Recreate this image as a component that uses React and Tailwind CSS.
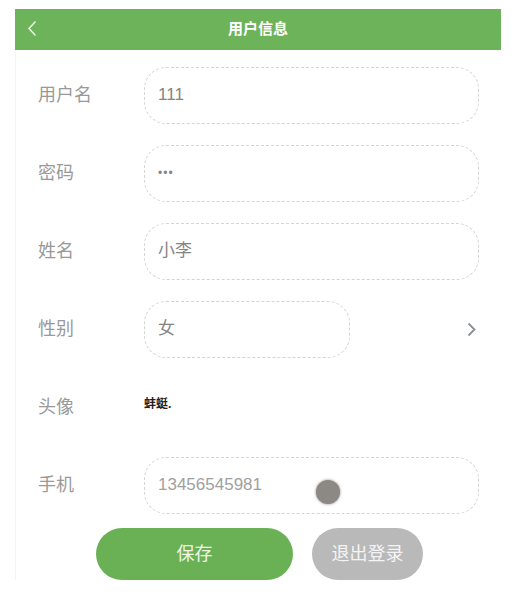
import { useState } from 'react'

const fields = [
  { label: '用户名', value: '111' },
  { label: '密码', value: '•••', small: true },
  { label: '姓名', value: '小李' },
]

function Field({ label, children }) {
  return (
    <div className="flex items-center h-[78px] pl-[22px] pr-[22px]">
      <div className="w-[106px] shrink-0 text-[18px] text-[#999999]">{label}</div>
      {children}
    </div>
  )
}

function Box({ value, className = '', textClass = 'text-[17px] text-[#858585]' }) {
  return (
    <div className={`h-[57px] rounded-[22px] border border-dashed border-[#d4d4d4] flex items-center px-[13px] ${className}`}>
      <span className={textClass}>{value}</span>
    </div>
  )
}

export default function App() {
  const [user] = useState({ phone: '13456545981', sex: '女' })

  return (
    <div className="min-h-[608px] bg-white pt-[9px] font-['Liberation_Sans','Noto_Sans_CJK_SC',sans-serif]">
      <div className="ml-[15px] w-[486px] relative">
        {/* 顶部栏 */}
        <div className="h-[41px] bg-[#6db35a] flex items-center relative">
          <svg className="absolute left-[12px] top-[11px]" width="10" height="17" viewBox="0 0 10 17" fill="none">
            <path d="M8.5 1.5 L2 8.5 L8.5 15.5" stroke="#e8f4e2" strokeWidth="1.5" />
          </svg>
          <div className="w-full text-center text-[15px] font-bold text-white">用户信息</div>
        </div>

        <div className="border-l border-[#f3f3f3] pt-[6px]">
          {fields.map((f) => (
            <Field key={f.label} label={f.label}>
              <Box
                value={f.value}
                className="flex-1"
                textClass={f.small ? 'text-[12px] tracking-[1px] text-[#858585]' : undefined}
              />
            </Field>
          ))}

          <Field label="性别">
            <Box value={user.sex} className="w-[206px]" />
            <div className="flex-1 flex justify-end pr-[3px]">
              <svg width="9" height="15" viewBox="0 0 9 15" fill="none">
                <path d="M1.5 1.5 L7.5 7.5 L1.5 13.5" stroke="#8a8f93" strokeWidth="1.8" />
              </svg>
            </div>
          </Field>

          <Field label="头像">
            <span className="text-[12px] font-bold text-[#222] -mt-[6px]">蚌蜓.</span>
          </Field>

          <Field label="手机">
            <Box value={user.phone} className="flex-1" textClass="text-[17px] text-[#a0a0a0]" />
          </Field>

          <div className="flex gap-[19px] pl-[80px] pt-[4px]">
            <button className="w-[197px] h-[52px] rounded-full bg-[#6ab155] text-[18px] text-[#eef7e8]">保存</button>
            <button className="w-[111px] h-[52px] rounded-full bg-[#b9b9b9] text-[18px] text-[#f4f4f4]">退出登录</button>
          </div>
        </div>

        {/* 触摸点 */}
        <div className="absolute left-[301px] top-[471px] w-[24px] h-[24px] rounded-full bg-[#8c8883] shadow-[0_0_3px_#8c8883]"></div>
      </div>
    </div>
  )
}
